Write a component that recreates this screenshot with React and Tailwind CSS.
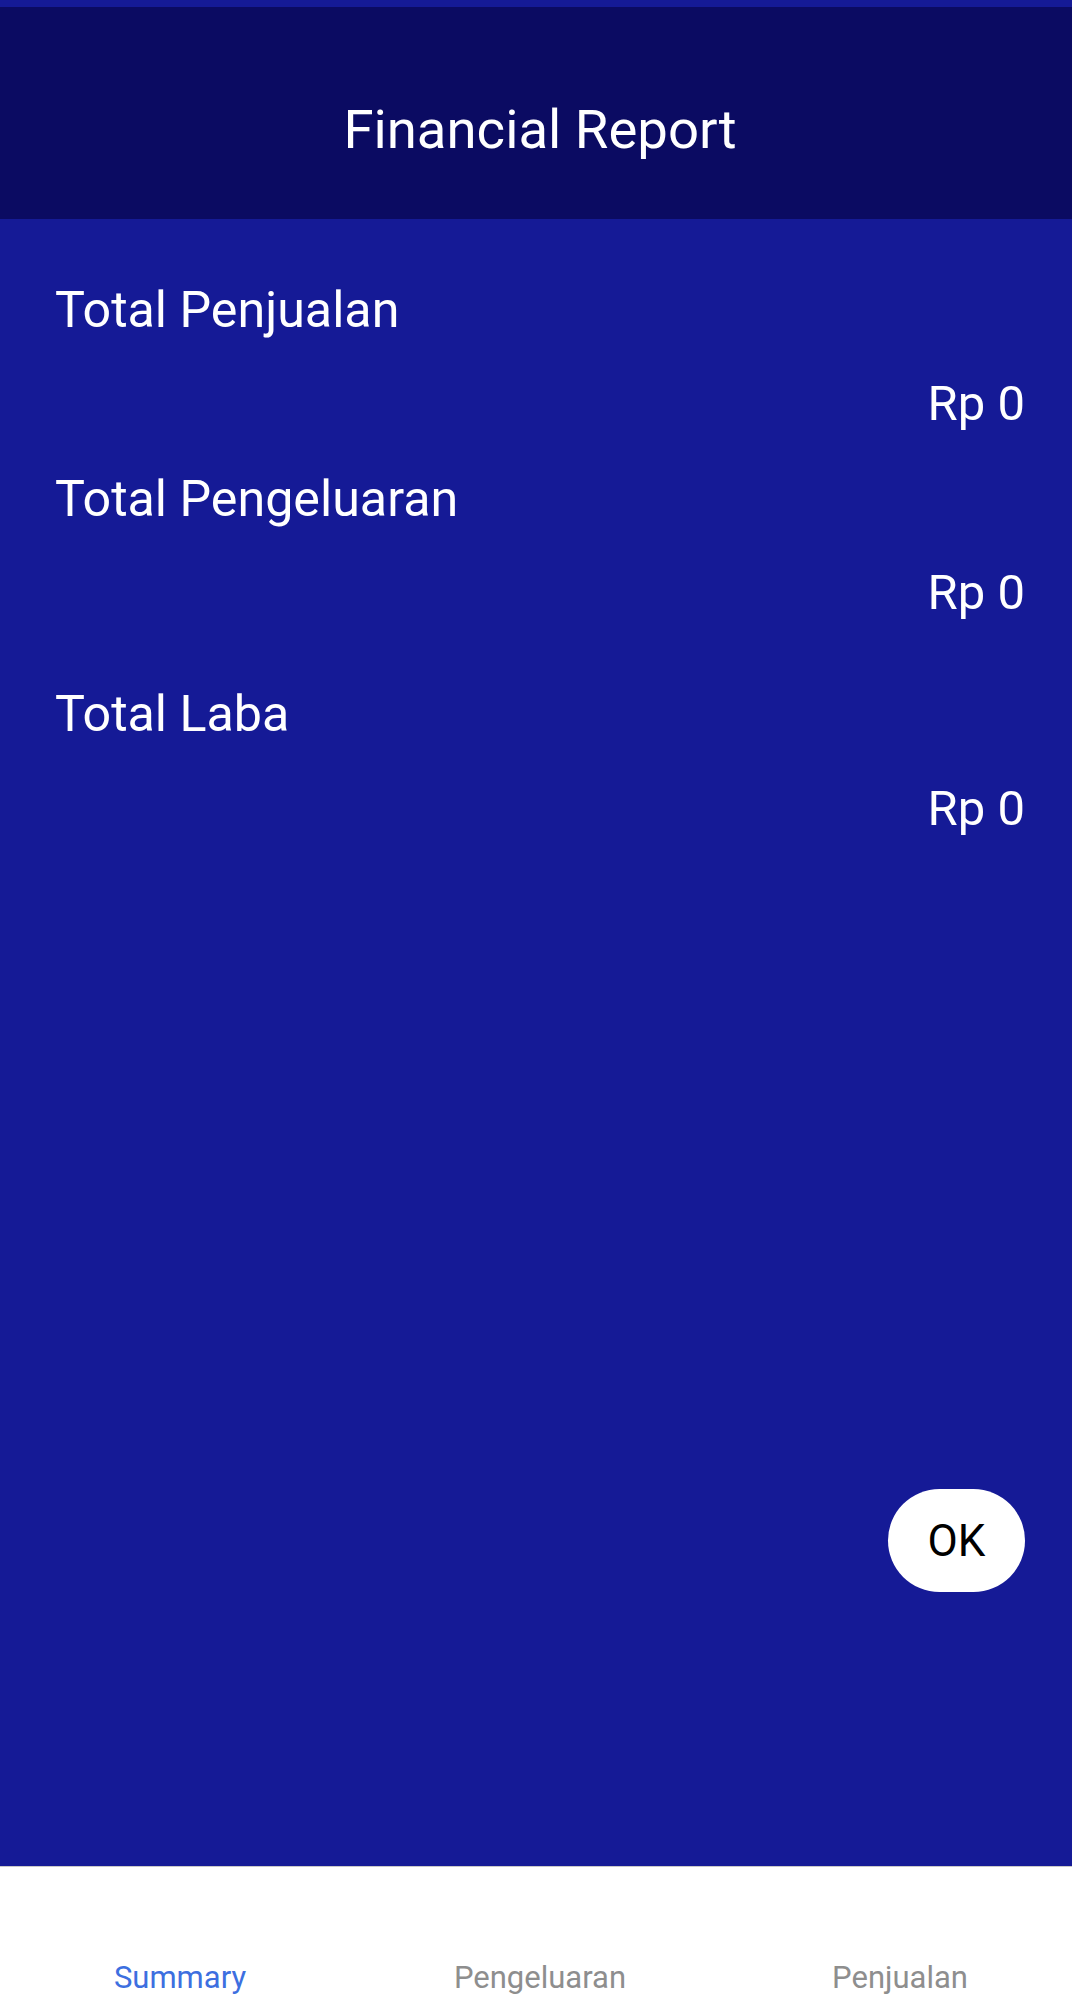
import React from 'react';

const rows = [
  { label: 'Total Penjualan', value: 'Rp 0', gap: 'mt-0' },
  { label: 'Total Pengeluaran', value: 'Rp 0', gap: 'mt-[46px]' },
  { label: 'Total Laba', value: 'Rp 0', gap: 'mt-[72px]' },
];

const tabs = [
  { name: 'Summary', active: true },
  { name: 'Pengeluaran', active: false },
  { name: 'Penjualan', active: false },
];

export default function App() {
  return (
    <div className="w-full h-[2001px] overflow-hidden">
      {/* the screen is laid out 1080 wide; the window crops the last few pixels */}
      <div
        className="w-[1080px] h-[2001px] flex flex-col bg-[#151a96]"
        style={{ fontFamily: 'Roboto, "Noto Sans", sans-serif' }}
      >
        {/* status strip */}
        <div className="h-[7px] bg-[#151a96]" />

        {/* header */}
        <div className="h-[212px] bg-[#0b0b62] pt-[95px] text-center">
          <h1 className="text-[54.5px] leading-none text-white font-normal">Financial Report</h1>
        </div>

        {/* summary body */}
        <div className="h-[1647px] flex flex-col pt-[66px] px-[55px]">
          {rows.map((row) => (
            <div key={row.label} className={`flex flex-col ${row.gap}`}>
              <span className="text-[50.2px] leading-none text-white">{row.label}</span>
              <span className="mt-[44px] self-end text-[49px] leading-none text-white">{row.value}</span>
            </div>
          ))}

          <div className="flex-1" />

          <button className="self-end mb-[274px] w-[137px] h-[103px] rounded-full bg-white text-black text-[44px] leading-none">
            OK
          </button>
        </div>

        {/* bottom tabs */}
        <div className="h-[135px] bg-white border-t border-[#c9c9c9] grid grid-cols-3">
          {tabs.map((tab) => (
            <div key={tab.name} className="flex justify-center pt-[95px]">
              <span
                className={`text-[31px] leading-none ${
                  tab.active ? 'text-[#3d6fe0]' : 'text-[#8e8e8e]'
                }`}
              >
                {tab.name}
              </span>
            </div>
          ))}
        </div>
      </div>
    </div>
  );
}
